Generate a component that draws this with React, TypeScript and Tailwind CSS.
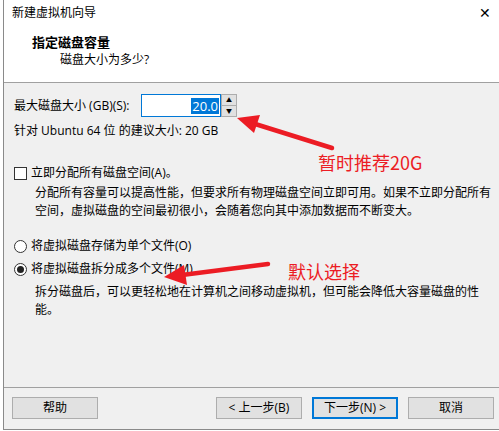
import React from "react";

const font = { fontFamily: '"Open Sans", "Noto Sans CJK SC", sans-serif' };
const cjk = { fontFamily: '"Noto Sans CJK SC", sans-serif' };

function Button({ label, primary }: { label: string; primary?: boolean }) {
  return (
    <div
      className={
        "w-[86px] h-[22px] flex items-center justify-center bg-[#e1e1e1] text-[12px] text-black " +
        (primary ? "border-2 border-[#0078d7]" : "border border-[#adadad]")
      }
    >
      {label}
    </div>
  );
}

export default function App() {
  return (
    <div className="w-[499px] h-[431px] bg-white pl-[3px] pb-[1px] relative" style={font}>
      <div className="h-full flex flex-col border-l border-b border-[#8a8a8a] bg-[#f0f0f0]">
        {/* Header */}
        <div className="h-[83px] bg-white border-b border-[#a0a0a0] relative">
          <div className="pl-[8px] pt-[5px] text-[12px] leading-[16px] text-black">新建虚拟机向导</div>
          <div className="absolute right-[8px] top-[5px] text-[14px] leading-[16px] text-black">✕</div>
          <div className="pl-[28px] pt-[13px] text-[13px] leading-[16px] font-bold text-black">指定磁盘容量</div>
          <div className="pl-[56px] pt-[2px] text-[12px] leading-[16px] text-black">磁盘大小为多少?</div>
        </div>

        {/* Body */}
        <div className="flex-1 px-[10px] text-[12px] text-black">
          <div className="mt-[11px] flex items-center h-[23px]">
            <span className="leading-[16px] w-[127px]">最大磁盘大小 (GB)(S):</span>
            <div className="w-[80px] h-[23px] border border-[#0078d7] bg-white flex items-center justify-end pr-[1px]">
              <span className="bg-[#0078d7] text-white text-[13px] leading-[16px] px-[1px]">20.0</span>
            </div>
            <div className="w-[16px] h-[23px] border border-[#adadad] flex flex-col bg-[#e1e1e1]">
              <div className="flex-1 flex items-center justify-center border-b border-[#adadad] text-[6px] leading-none">▲</div>
              <div className="flex-1 flex items-center justify-center text-[6px] leading-none">▼</div>
            </div>
          </div>
          <div className="mt-[6px] leading-[16px]">针对 Ubuntu 64 位 的建议大小: 20 GB</div>

          <div className="mt-[26px] flex items-center h-[16px]">
            <div className="w-[13px] h-[13px] border border-[#333] bg-white"></div>
            <span className="ml-[4px] leading-[16px]">立即分配所有磁盘空间(A)。</span>
          </div>
          <div className="mt-[2px] pl-[21px] leading-[18px] whitespace-nowrap" style={cjk}>
            分配所有容量可以提高性能，但要求所有物理磁盘空间立即可用。如果不立即分配所有
            <br />
            空间，虚拟磁盘的空间最初很小，会随着您向其中添加数据而不断变大。
          </div>

          <div className="mt-[19px] flex items-center h-[16px]">
            <div className="w-[13px] h-[13px] rounded-full border border-[#333] bg-white"></div>
            <span className="ml-[4px] leading-[16px]">将虚拟磁盘存储为单个文件(O)</span>
          </div>
          <div className="mt-[7px] flex items-center h-[16px]">
            <div className="w-[13px] h-[13px] rounded-full border border-[#333] bg-white flex items-center justify-center">
              <div className="w-[7px] h-[7px] rounded-full bg-[#222]"></div>
            </div>
            <span className="ml-[4px] leading-[16px]">将虚拟磁盘拆分成多个文件(M)</span>
          </div>
          <div className="mt-[6px] pl-[21px] leading-[16px] whitespace-nowrap" style={cjk}>
            拆分磁盘后，可以更轻松地在计算机之间移动虚拟机，但可能会降低大容量磁盘的性
            <br />
            <span className="inline-block mt-[2px]">能。</span>
          </div>
        </div>

        {/* Footer */}
        <div className="h-[42px] border-t border-[#a0a0a0] flex items-start pt-[9px] pl-[8px] pr-[5px]">
          <Button label="帮助" />
          <div className="flex-1" />
          <div className="flex gap-[10px]">
            <Button label="< 上一步(B)" />
            <Button label="下一步(N) >" primary />
            <Button label="取消" />
          </div>
        </div>
      </div>

      {/* Annotations */}
      <svg className="absolute left-0 top-0 pointer-events-none" width="499" height="431">
        <line x1="332" y1="148" x2="252" y2="123" stroke="#ec1c24" strokeWidth="4.5" strokeLinecap="round" />
        <polygon points="237,118 260,115 254,133" fill="#ec1c24" />
        <line x1="268" y1="264" x2="182" y2="275" stroke="#ec1c24" strokeWidth="4.5" strokeLinecap="round" />
        <polygon points="164,277 184,265 187,285" fill="#ec1c24" />
      </svg>
      <div className="absolute left-[318px] top-[153px] text-[18px] leading-[18px] text-[#ec1c24]" style={cjk}>暂时推荐20G</div>
      <div className="absolute left-[288px] top-[263px] text-[18px] leading-[16px] text-[#ec1c24]" style={cjk}>默认选择</div>
    </div>
  );
}
